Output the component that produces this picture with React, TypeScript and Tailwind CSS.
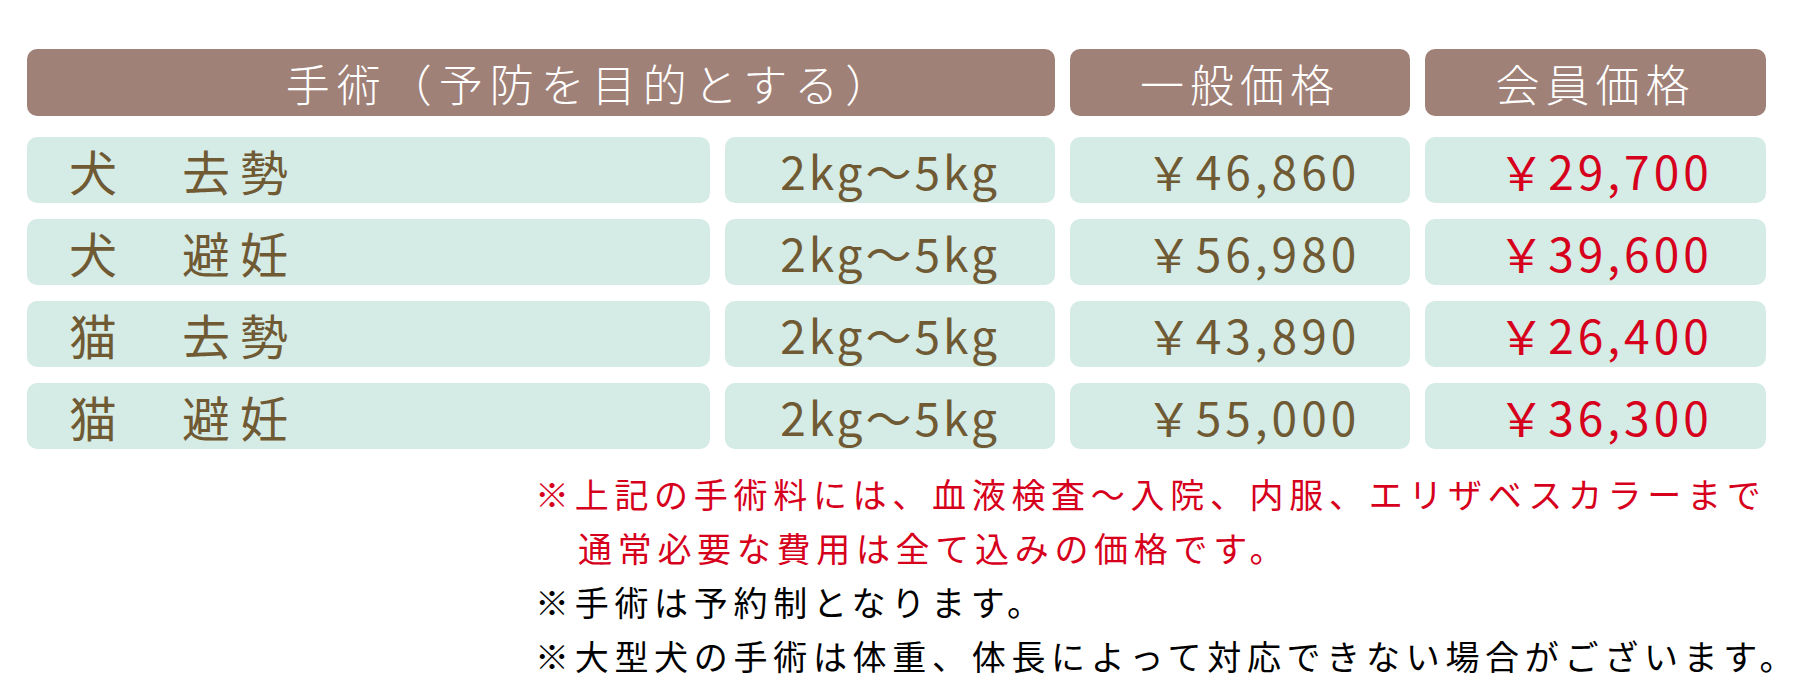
const FONT = { fontFamily: '"Noto Sans CJK JP", "Noto Sans", sans-serif' }

const ROWS = [
  { animal: '犬', kind: '去勢', weight: '2kg～5kg', normal: '￥46,860', member: '￥29,700' },
  { animal: '犬', kind: '避妊', weight: '2kg～5kg', normal: '￥56,980', member: '￥39,600' },
  { animal: '猫', kind: '去勢', weight: '2kg～5kg', normal: '￥43,890', member: '￥26,400' },
  { animal: '猫', kind: '避妊', weight: '2kg～5kg', normal: '￥55,000', member: '￥36,300' }
]

const App = () => {
  return (
    <div className="bg-white w-[1801px] h-[686px] overflow-hidden" style={FONT}>
      <div className="pt-[49px] pl-[27px]">
        <div className="grid grid-cols-[683px_330px_340px_341px] gap-x-[15px] w-[1739px]">
          {/* header */}
          <div className="col-span-2 h-[67px] rounded-[10px] bg-[#9f8178] flex items-center justify-center pl-[100px] text-white text-[44px] tracking-[7px] font-light">
            手術（予防を目的とする）
          </div>
          <div className="h-[67px] rounded-[10px] bg-[#9f8178] flex items-center justify-center text-white text-[44px] tracking-[6px] font-light">
            一般価格
          </div>
          <div className="h-[67px] rounded-[10px] bg-[#9f8178] flex items-center justify-center text-white text-[44px] tracking-[6px] font-light">
            会員価格
          </div>
        </div>

        <div className="mt-[21px] grid grid-cols-[683px_330px_340px_341px] gap-x-[15px] gap-y-[16px] w-[1739px]">
          {ROWS.map((row, idx) => (
            <div key={idx} className="contents">
              <div className="h-[66px] rounded-[10px] bg-[#d5ebe5] flex items-center pl-[42px] text-[#6f5a34] text-[48px]">
                <span className="w-[113px]">{row.animal}</span>
                <span className="tracking-[10px]">{row.kind}</span>
              </div>
              <div className="h-[66px] rounded-[10px] bg-[#d5ebe5] flex items-center justify-center text-[#6f5a34] text-[46px] tracking-[3px]">
                {row.weight}
              </div>
              <div className="h-[66px] rounded-[10px] bg-[#d5ebe5] flex items-center justify-center pl-[26px] text-[#6f5a34] text-[46px] tracking-[4px]">
                {row.normal}
              </div>
              <div className="h-[66px] rounded-[10px] bg-[#d5ebe5] flex items-center justify-center pl-[20px] text-[#d6001c] text-[46px] tracking-[4px]">
                {row.member}
              </div>
            </div>
          ))}
        </div>
      </div>

      <div className="mt-[18px] pl-[535px] text-[34px] leading-[54px] tracking-[5.7px] whitespace-nowrap">
        <p className="text-[#d6001c]">※上記の手術料には、血液検査～入院、内服、エリザベスカラーまで</p>
        <p className="text-[#d6001c] pl-[43px]">通常必要な費用は全て込みの価格です。</p>
        <p className="text-black">※手術は予約制となります。</p>
        <p className="text-black">※大型犬の手術は体重、体長によって対応できない場合がございます。</p>
      </div>
    </div>
  )
}

export default App
